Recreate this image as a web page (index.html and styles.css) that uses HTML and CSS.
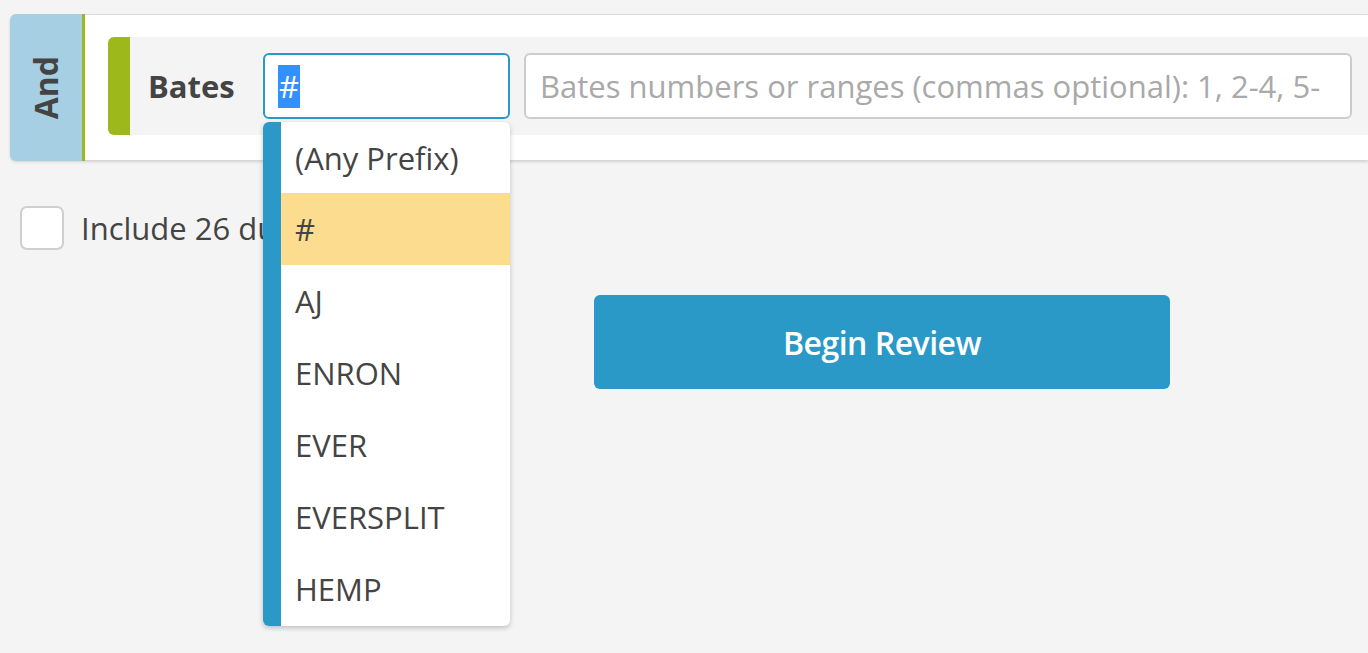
FILE: index.html
```html
<!DOCTYPE html>
<html>
<head>
<meta charset="utf-8">
<link rel="stylesheet" href="styles.css">
</head>
<body>
<div class="page">
  <div class="group">
    <div class="and-tab"><span class="and-text">And</span></div>
    <div class="group-body">
      <div class="row">
        <div class="row-bar"></div>
        <div class="label">Bates</div>
        <div class="prefix-wrap">
          <div class="prefix-input"><span class="sel">#</span></div>
          <div class="dropdown">
            <div class="dd-strip"></div>
            <ul class="dd-list">
              <li class="dd-item">(Any Prefix)</li>
              <li class="dd-item active">#</li>
              <li class="dd-item">AJ</li>
              <li class="dd-item">ENRON</li>
              <li class="dd-item">EVER</li>
              <li class="dd-item">EVERSPLIT</li>
              <li class="dd-item">HEMP</li>
            </ul>
          </div>
        </div>
        <div class="range-input"><span class="placeholder">Bates numbers or ranges (commas optional): 1, 2-4, 5-</span></div>
      </div>
    </div>
  </div>
  <div class="check-row">
    <div class="checkbox"></div>
    <div class="check-label">Include 26 duplicates</div>
  </div>
  <div class="actions">
    <button class="btn-primary">Begin Review</button>
  </div>
</div>
</body>
</html>
```

FILE: styles.css
```css
html, body {
  margin: 0;
  padding: 0;
  background: #f4f4f4;
  font-family: "Open Sans", "Noto Sans", sans-serif;
  color: #444;
  overflow: hidden;
}

.page {
  padding: 14px 0 0 10px;
  width: 1358px;
  height: 639px;
  overflow: hidden;
}

.group {
  display: flex;
  background: #fff;
  height: 146px;
  border-top: 1px solid #dcdcdc;
  box-shadow: 0 2px 3px rgba(0, 0, 0, 0.14);
  border-radius: 6px 0 0 6px;
  box-sizing: border-box;
}

.and-tab {
  width: 72px;
  background: #a6cfe4;
  border-right: 3px solid #9db81a;
  border-radius: 6px 0 0 6px;
  display: flex;
  align-items: center;
  justify-content: center;
  margin-top: -1px;
  margin-bottom: -1px;
}

.and-text {
  writing-mode: vertical-rl;
  transform: rotate(180deg);
  font-weight: 700;
  font-size: 32px;
  color: #444;
  line-height: 1;
}

.group-body {
  flex: 1;
  padding: 22px 0 0 23px;
}

.row {
  display: flex;
  align-items: center;
  background: #f4f4f4;
  height: 98px;
  border-radius: 6px 0 0 6px;
}

.row-bar {
  width: 22px;
  align-self: stretch;
  background: #9db81a;
  border-radius: 6px 0 0 6px;
}

.label {
  margin-left: 18px;
  width: 115px;
  font-size: 31px;
  font-weight: 700;
  color: #444;
}

.prefix-wrap {
  position: relative;
  width: 247px;
  height: 66px;
}

.prefix-input {
  box-sizing: border-box;
  width: 100%;
  height: 100%;
  background: #fff;
  border: 2px solid #2b99c8;
  border-radius: 6px;
  padding: 0 0 0 13px;
  display: flex;
  align-items: center;
  font-size: 31px;
}

.sel {
  background: #3390ff;
  color: #fff;
  line-height: 43px;
  padding: 0 1px;
}

.dropdown {
  position: absolute;
  left: 0;
  top: calc(100% + 3px);
  width: 247px;
  height: 504px;
  display: flex;
  background: #fff;
  border-radius: 6px;
  box-shadow: 0 2px 5px rgba(0, 0, 0, 0.22);
  overflow: hidden;
  z-index: 10;
}

.dd-strip {
  width: 18px;
  background: #2b99c8;
}

.dd-list {
  flex: 1;
  list-style: none;
  margin: 0;
  padding: 0;
}

.dd-item {
  height: 72px;
  display: flex;
  align-items: center;
  padding-left: 14px;
  font-size: 31px;
  color: #444;
}

.dd-item:first-child {
  height: 71px;
}

.dd-item.active {
  background: #fcdc8f;
}

.range-input {
  box-sizing: border-box;
  flex: 1;
  height: 66px;
  margin-left: 14px;
  margin-right: 16px;
  background: #fff;
  border: 2px solid #cccccc;
  border-radius: 6px;
  padding: 0 0 0 14px;
  display: flex;
  align-items: center;
  overflow: hidden;
  white-space: nowrap;
  font-size: 31px;
}

.placeholder {
  color: #a9a9a9;
}

.check-row {
  display: flex;
  align-items: center;
  margin-top: 46px;
  padding-left: 10px;
}

.checkbox {
  box-sizing: border-box;
  width: 44px;
  height: 44px;
  background: #fff;
  border: 2px solid #cfcfcf;
  border-radius: 7px;
}

.check-label {
  margin-left: 17px;
  font-size: 31px;
  color: #444;
}

.actions {
  margin-top: 45px;
  padding-left: 584px;
}

.btn-primary {
  width: 576px;
  height: 94px;
  background: #2b99c8;
  color: #fff;
  border: none;
  border-radius: 6px;
  font-family: "Open Sans", "Noto Sans", sans-serif;
  font-weight: 600;
  font-size: 32px;
  letter-spacing: -0.5px;
}
```
